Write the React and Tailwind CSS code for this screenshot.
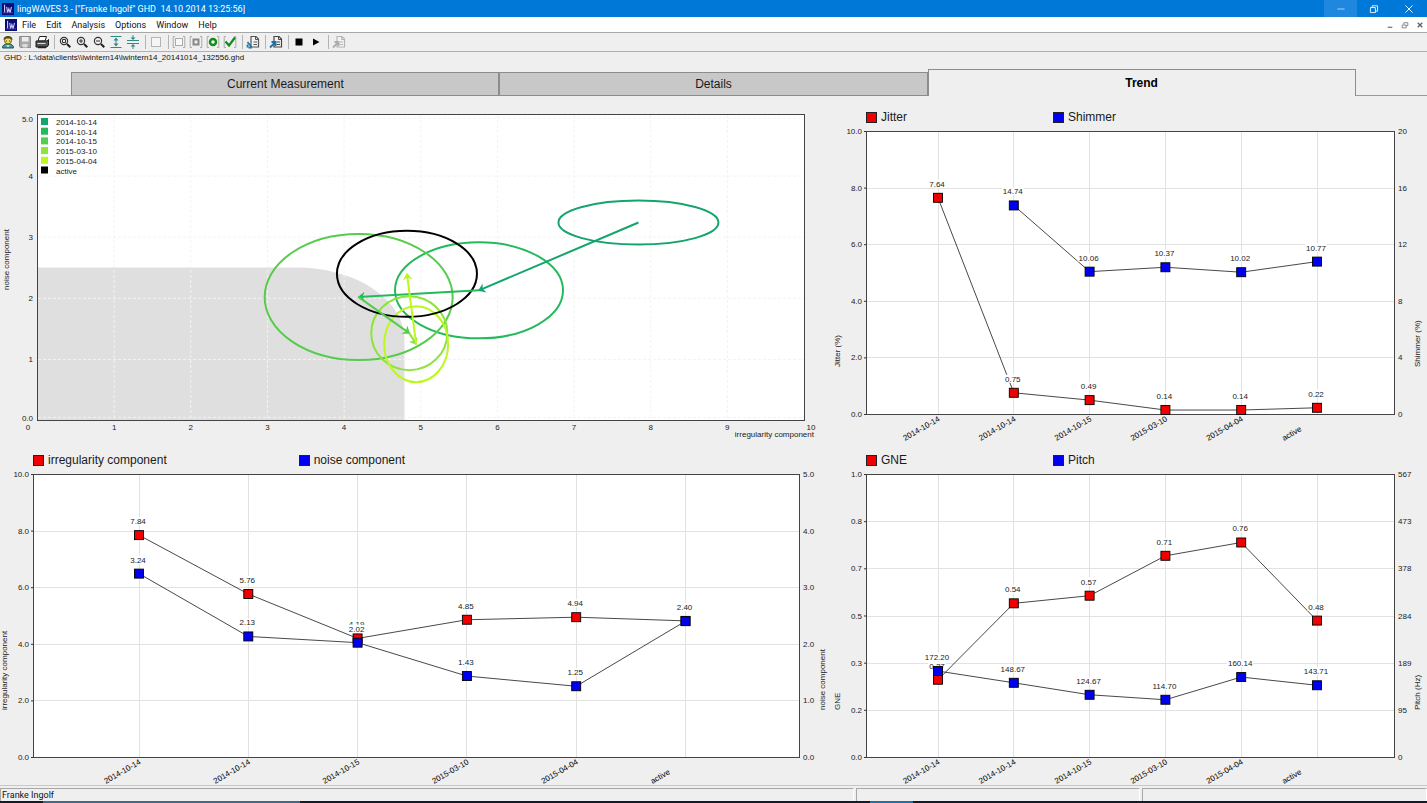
import React, { useState } from 'react';
import clsx from 'clsx';

const MENU = ['File', 'Edit', 'Analysis', 'Options', 'Window', 'Help'];
const TABS = ['Current Measurement', 'Details', 'Trend'];
const SESSIONS = ['2014-10-14', '2014-10-14', '2014-10-15', '2015-03-10', '2015-04-04', 'active'];

const RED = '#f00000';
const BLUE = '#0000f0';

const trendCharts = {
  components: {
    width: 830,
    left: 33,
    right: 799,
    firstX: 139,
    stepX: 109.3,
    leftTicks: ['10.0', '8.0', '6.0', '4.0', '2.0', '0.0'],
    rightTicks: ['5.0', '4.0', '3.0', '2.0', '1.0', '0.0'],
    leftTitle: 'irregularity component',
    rightTitle: 'noise component',
    series: [
      { name: 'irregularity component', color: RED, max: 10, values: [7.84, 5.76, 4.19, 4.85, 4.94, 4.81] },
      { name: 'noise component', color: BLUE, max: 5, values: [3.24, 2.13, 2.02, 1.43, 1.25, 2.4] }
    ]
  },
  jitter: {
    width: 597,
    left: 36,
    right: 564,
    firstX: 108,
    stepX: 75.8,
    leftTicks: ['10.0', '8.0', '6.0', '4.0', '2.0', '0.0'],
    rightTicks: ['20', '16', '12', '8', '4', '0'],
    leftTitle: 'Jitter (%)',
    rightTitle: 'Shimmer (%)',
    series: [
      { name: 'Jitter', color: RED, max: 10, values: [7.64, 0.75, 0.49, 0.14, 0.14, 0.22] },
      { name: 'Shimmer', color: BLUE, max: 20, values: [null, 14.74, 10.06, 10.37, 10.02, 10.77] }
    ]
  },
  gne: {
    width: 597,
    left: 36,
    right: 564,
    firstX: 108,
    stepX: 75.8,
    leftTicks: ['1.0', '0.8', '0.7', '0.5', '0.3', '0.2', '0.0'],
    rightTicks: ['567', '473', '378', '284', '189', '95', '0'],
    leftTitle: 'GNE',
    rightTitle: 'Pitch (Hz)',
    series: [
      { name: 'GNE', color: RED, max: 1, values: [0.273, 0.543, 0.57, 0.711, 0.758, 0.482] },
      { name: 'Pitch', color: BLUE, max: 567, values: [172.2, 148.67, 124.67, 114.7, 160.14, 143.71] }
    ]
  }
};

const ellipses = [
  { label: '2014-10-14', color: '#14a46c', x: 7.84, y: 3.24, rx: 80, ry: 22 },
  { label: '2014-10-14', color: '#24ba5c', x: 5.76, y: 2.13, rx: 84, ry: 48 },
  { label: '2014-10-15', color: '#56cc4c', x: 4.19, y: 2.02, rx: 94, ry: 63 },
  { label: '2015-03-10', color: '#8ce43c', x: 4.85, y: 1.43, rx: 38, ry: 37 },
  { label: '2015-04-04', color: '#bcf820', x: 4.94, y: 1.25, rx: 32, ry: 38 },
  { label: 'active', color: '#000000', x: 4.82, y: 2.4, rx: 70, ry: 43 }
];

/* ---------- toolbar icons ---------- */

const Svg = ({ children, className = 'h-3.5 w-3.5' }) => (
  <svg viewBox="0 0 14 14" className={className} fill="none" aria-hidden="true">
    {children}
  </svg>
);

const Logo = () => (
  <Svg className="h-3 w-3 shrink-0">
    <rect width="14" height="14" fill="#0b0b78" />
    <path d="M3 2v9M5.5 4.5l1 7 1.5-5 1.5 5 1.5-7" stroke="#c9c9f4" strokeWidth="1.3" />
    <path d="M1 11.5h12" stroke="#4f4fb8" />
  </Svg>
);

const Magnifier = ({ children }) => (
  <Svg>
    <circle cx="6" cy="6" r="3.6" stroke="#333" strokeWidth="1.2" />
    <path d="M9 9l3.3 3.3" stroke="#222" strokeWidth="2" />
    {children}
  </Svg>
);

const Brackets = ({ children }) => (
  <Svg>
    <path d="M3 1.5H1.2v11H3M11 1.5h1.8v11H11" stroke="#aaa" />
    {children}
  </Svg>
);

const PageArrow = ({ page, arrow, inward }) => (
  <Svg>
    <path d="M5 1.5h5L12.500 4v8H5z" fill="#f4f4f4" stroke={page} strokeWidth="1.2" />
    <path d="M9.5 1.500v3h3M7.500 7H11M7.500 9.500H11" stroke={page} />
    {inward ? (
      <path d="M1 12.5l5-5M2.500 7h4v4" stroke={arrow} strokeWidth="1.8" />
    ) : (
      <path d="M1.500 7l4 5M1.500 12.5v-3M2.500 12.500h3.500" stroke={arrow} strokeWidth="1.8" />
    )}
  </Svg>
);

const toolGroups = [
  [
    {
      name: 'Client',
      icon: (
        <Svg>
          <path d="M1.5 13c0-3 2-4 5.5-4s5.5 1 5.5 4z" fill="#3d9aa8" stroke="#24525c" />
          <circle cx="7" cy="5.5" r="3.5" fill="#f6dc58" stroke="#6b5a12" />
          <path d="M2.5 5C2.5 2 4.5 1 7 1s4.5 1 4.5 4L9 3.5H5z" fill="#4d4a12" />
          <path d="M5.5 5.5v1M8.5 5.5v1" stroke="#333" />
          <path d="M5 10l2 2.5L9 10z" fill="#f4e46a" />
        </Svg>
      )
    },
    {
      name: 'Save',
      icon: (
        <Svg>
          <path d="M1.5 1.5h11v11h-10l-1-1z" fill="#a9a9a9" stroke="#8a8a8a" />
          <path d="M4 2h6.5v4.5H4z" fill="#ededed" />
          <path d="M4.5 9h5v3.5h-5z" fill="#dcdcdc" />
        </Svg>
      )
    },
    {
      name: 'Print',
      icon: (
        <Svg>
          <path d="M4.5 1.5h7L10 6H3z" fill="#fff" stroke="#222" />
          <path d="M1 6h11l1.5-1.5V10L12 12H1z" fill="#555" stroke="#1a1a1a" />
          <path d="M2.5 8.5h8" stroke="#ddd" />
          <path d="M3 12.5h8" stroke="#222" strokeWidth="1.5" />
        </Svg>
      )
    }
  ],
  [
    { name: 'Zoom selection', icon: <Magnifier><path d="M4.5 4.5h3v3h-3z" stroke="#333" /></Magnifier> },
    { name: 'Zoom in', icon: <Magnifier><path d="M4 6h4M6 4v4" stroke="#333" /></Magnifier> },
    { name: 'Zoom out', icon: <Magnifier><path d="M4 6h4" stroke="#333" /></Magnifier> },
    {
      name: 'Expand',
      icon: (
        <Svg>
          <path d="M1.5 1.5h11M1.5 12.5h11" stroke="#2d8c86" strokeWidth="1.2" />
          <path d="M7 4v6" stroke="#2d8c86" />
          <path d="M4.5 5.5L7 2.5l2.5 3zM4.5 8.5l2.5 3 2.5-3z" fill="#2d8c86" />
        </Svg>
      )
    },
    {
      name: 'Compress',
      icon: (
        <Svg>
          <path d="M1 5.5h12M1 8.5h12" stroke="#2d8c86" strokeWidth="1.2" />
          <path d="M7 0v3M7 11v3" stroke="#2d8c86" />
          <path d="M4.5 2.5L7 5l2.5-2.5zM4.5 11.5L7 9l2.5 2.5z" fill="#2d8c86" />
        </Svg>
      )
    }
  ],
  [{ name: 'Frame', icon: <Svg><rect x="2.5" y="2.5" width="9" height="9" fill="#f5f5f5" stroke="#b4b4b4" /></Svg> }],
  [
    { name: 'Empty marker', icon: <Brackets><rect x="3.5" y="3.5" width="7" height="7" fill="#f8f8f8" stroke="#aaa" /></Brackets> },
    { name: 'Filled marker', icon: <Brackets><rect x="4.5" y="4.5" width="5" height="5" fill="#eee" stroke="#888" strokeWidth="2" /></Brackets> },
    { name: 'Record', icon: <Brackets><circle cx="7" cy="7" r="3" fill="#fff" stroke="#148c1c" strokeWidth="2.5" /></Brackets> },
    { name: 'Accept', icon: <Brackets><path d="M2.5 6.5L6 10.5l6-8" stroke="#128a18" strokeWidth="2.2" /></Brackets> }
  ],
  [{ name: 'Import', icon: <PageArrow page="#555" arrow="#2878a8" /> }],
  [{ name: 'Export', icon: <PageArrow page="#444" arrow="#2070a8" inward /> }],
  [
    { name: 'Stop', icon: <Svg><path d="M3.5 3.5h7v7h-7z" fill="#000" /></Svg> },
    { name: 'Play', icon: <Svg><path d="M4 3.5v7L10.5 7z" fill="#000" /></Svg> }
  ],
  [{ name: 'Send', icon: <PageArrow page="#b4b4b4" arrow="#adadad" inward /> }]
];

/* ---------- window chrome ---------- */

const TitleBar = () => (
  <header className="flex h-[17px] items-center bg-[#0078d7] pl-0.5 text-white">
    <Logo />
    <h1 className="grow whitespace-pre pl-[3px] font-[Roboto,sans-serif] text-[9px] leading-3">
      {'lingWAVES 3 - ["Franke Ingolf" GHD  14.10.2014 13:25:56]'}
    </h1>
    <button aria-label="Minimize" className="flex h-full w-[33px] items-center justify-center bg-[#1f88de]">
      <Svg className="h-2.5 w-2.5"><path d="M2 7h10" stroke="#d5ecff" /></Svg>
    </button>
    <button aria-label="Restore" className="flex h-full w-[34px] items-center justify-center">
      <Svg className="h-2.5 w-2.5"><path d="M2 5h7v7H2zM4.5 5V2.5H12V10H9" stroke="#fff" strokeWidth="1.2" /></Svg>
    </button>
    <button aria-label="Close" className="flex h-full w-9 items-center justify-center">
      <Svg className="h-2.5 w-2.5"><path d="M2 2l10 10M12 2L2 12" stroke="#fff" strokeWidth="1.3" /></Svg>
    </button>
  </header>
);

const MenuBar = () => (
  <nav className="flex h-4 items-center border-b border-[#a8a8a8] bg-white pl-[5px] font-[Roboto,sans-serif] text-[9px] leading-3 text-[#111]">
    <Logo />
    <div className="flex grow gap-2.5 pl-[5px]">
      {MENU.map((item) => (
        <button key={item}>{item}</button>
      ))}
    </div>
    <div className="flex">
      <button aria-label="Minimize document" className="flex w-[15px] justify-center">
        <Svg className="h-2 w-2"><path d="M3 11h8" stroke="#666" strokeWidth="2" /></Svg>
      </button>
      <button aria-label="Restore document" className="flex w-[15px] justify-center">
        <Svg className="h-2 w-2"><path d="M2 7h7v5H2zM5 6V3h7v5H9" stroke="#777" strokeWidth="1.5" /></Svg>
      </button>
      <button aria-label="Close document" className="flex w-[15px] justify-center">
        <Svg className="h-2 w-2"><path d="M3 3l8 8M11 3l-8 8" stroke="#666" strokeWidth="2.5" /></Svg>
      </button>
    </div>
  </nav>
);

const Toolbar = () => (
  <div role="toolbar" className="flex h-[19px] items-center border-b border-[#b0b0b0]">
    {toolGroups.map((group, i) => (
      <React.Fragment key={i}>
        {i > 0 && (
          <div className="flex w-1.5 justify-center">
            <div className="h-3.5 w-px bg-[#b4b4b4]" />
          </div>
        )}
        {group.map((tool) => (
          <button key={tool.name} aria-label={tool.name} className="flex w-[17px] pl-px">
            {tool.icon}
          </button>
        ))}
      </React.Fragment>
    ))}
  </div>
);

const Tabs = ({ active, onChange }) => (
  <div role="tablist" className="grid h-[27px] grid-cols-[5fr_30fr_30fr_30fr_5fr] items-end">
    <div className="h-full border-b border-[#999]" />
    {TABS.map((tab) => (
      <button
        key={tab}
        role="tab"
        aria-selected={tab === active}
        onClick={() => onChange(tab)}
        className={clsx(
          'border-[#8c8c8c] text-xs text-[#1a1a1a]',
          tab === active ? 'h-[27px] border-x border-t font-bold text-black' : 'h-6 border bg-[#c8c8c8]'
        )}
      >
        {tab}
      </button>
    ))}
    <div className="h-full border-b border-[#999]" />
  </div>
);

/* ---------- charts ---------- */

const ChartLegend = ({ series, className }) => (
  <div className={clsx('flex h-[22px] items-center pt-0.5 text-xs text-[#1a1a1a]', className)}>
    {series.map((s) => (
      <div key={s.name} className="flex w-1/3 items-center gap-1">
        <span className="h-[11px] w-[11px] border border-[#222]" style={{ backgroundColor: s.color }} />
        <span>{s.name}</span>
      </div>
    ))}
  </div>
);

const PLOT_TOP = 4;
const PLOT_HEIGHT = 283;
const PLOT_BOTTOM = PLOT_TOP + PLOT_HEIGHT;

const LineChart = ({ chart }) => {
  const { width, left, right, firstX, stepX, leftTicks, rightTicks } = chart;
  const xOf = (i) => firstX + i * stepX;
  const tickY = (i, ticks) => PLOT_TOP + (i * PLOT_HEIGHT) / (ticks.length - 1);

  return (
    <svg viewBox={`0 0 ${width} 315`} className="block w-full text-[8px]" fill="#222">
      <rect x={left + 0.5} y={PLOT_TOP + 0.5} width={right - left} height={PLOT_HEIGHT} fill="#fff" />
      <g stroke="#e2e2e2" shapeRendering="crispEdges">
        {leftTicks.map((t, i) => (
          <line key={t} x1={left} x2={right} y1={tickY(i, leftTicks) + 0.5} y2={tickY(i, leftTicks) + 0.5} />
        ))}
        {SESSIONS.map((s, i) => (
          <line key={i} x1={xOf(i)} x2={xOf(i)} y1={PLOT_TOP} y2={PLOT_BOTTOM} />
        ))}
      </g>
      <rect
        x={left + 0.5}
        y={PLOT_TOP + 0.5}
        width={right - left}
        height={PLOT_HEIGHT}
        fill="none"
        stroke="#444"
        shapeRendering="crispEdges"
      />

      {/* axes */}
      {leftTicks.map((t, i) => (
        <g key={t}>
          <line x1={left - 2} x2={left} y1={tickY(i, leftTicks) + 0.5} y2={tickY(i, leftTicks) + 0.5} stroke="#333" />
          <text x={left - 4} y={tickY(i, leftTicks) + 3} textAnchor="end">{t}</text>
        </g>
      ))}
      {rightTicks.map((t, i) => (
        <text key={t} x={right + 4} y={tickY(i, rightTicks) + 3}>{t}</text>
      ))}
      {SESSIONS.map((s, i) => (
        <text key={i} fill="#000" transform={`translate(${xOf(i) - 33} 314) rotate(-30)`}>{s}</text>
      ))}
      <text transform={`translate(${left - 26} 240) rotate(-90)`}>{chart.leftTitle}</text>
      <text transform={`translate(${right + 26} 240) rotate(-90)`}>{chart.rightTitle}</text>

      {/* series */}
      {chart.series.map((s) => {
        const points = s.values
          .map((v, i) => ({ v, x: xOf(i), y: PLOT_BOTTOM - (v / s.max) * PLOT_HEIGHT }))
          .filter((p) => p.v !== null);
        return (
          <g key={s.name}>
            <polyline points={points.map((p) => `${p.x},${p.y}`).join(' ')} fill="none" stroke="#333" strokeWidth="0.9" />
            {points.map((p) => {
              const label = p.v.toFixed(2);
              const w = label.length * 4.4;
              return (
                <g key={p.x}>
                  <rect x={p.x - 1 - w / 2} y={p.y - 18} width={w} height="8" fill="#fff" />
                  <text x={p.x - 1} y={p.y - 11} textAnchor="middle">{label}</text>
                  <rect x={p.x - 4.5} y={p.y - 4.5} width="9" height="9" fill={s.color} stroke="#000" strokeWidth="0.9" />
                </g>
              );
            })}
          </g>
        );
      })}
    </svg>
  );
};

const ScatterChart = () => {
  const xOf = (v) => 37.5 + v * 76.65;
  const yOf = (v) => 324.5 - v * 61.1;

  return (
    <svg viewBox="0 0 830 352" className="block w-full text-[8px]" fill="#222">
      <rect x="37.5" y="18.5" width="767" height="306" fill="#fff" />
      <path d="M37.5 171.5H296A108 72 0 0 1 404.5 244V324.5H37.5z" fill="#dfdfdf" />
      <g stroke="#f3f3f3" strokeDasharray="3 2">
        {[1, 2, 3, 4, 5, 6, 7, 8, 9].map((v) => (
          <line key={v} x1={xOf(v)} x2={xOf(v)} y1="19" y2="324" />
        ))}
        {[0.05, 1, 2, 3, 4, 4.95].map((v) => (
          <line key={v} x1="38" x2="804" y1={yOf(v)} y2={yOf(v)} />
        ))}
      </g>
      <rect x="37.5" y="18.5" width="767" height="306" fill="none" stroke="#444" />

      {/* axis labels */}
      <g textAnchor="end">
        <text x="33" y="26">5.0</text>
        {[4, 3, 2, 1].map((v) => (
          <text key={v} x="33" y={yOf(v) + 3}>{v}</text>
        ))}
        <text x="33" y="325">0.0</text>
      </g>
      <g textAnchor="middle">
        <text x="28" y="334">0</text>
        {[1, 2, 3, 4, 5, 6, 7, 8, 9].map((v) => (
          <text key={v} x={xOf(v)} y="334">{v}</text>
        ))}
        <text x="811" y="334">10</text>
      </g>
      <text x="814" y="341" textAnchor="end">irregularity component</text>
      <text transform="translate(9 194) rotate(-90)">noise component</text>

      {/* legend */}
      {ellipses.map((e, i) => (
        <g key={i}>
          <rect x="41" y={22 + i * 9.7} width="7" height="7" fill={e.color} />
          <text x="56" y={29 + i * 9.7}>{e.label}</text>
        </g>
      ))}

      {/* spread of each session */}
      {ellipses.map((e, i) => (
        <ellipse
          key={i}
          cx={xOf(e.x)}
          cy={yOf(e.y)}
          rx={e.rx}
          ry={e.ry}
          fill="none"
          stroke={e.color}
          strokeWidth="2"
        />
      ))}

      {/* arrows from one session to the next */}
      {ellipses.slice(0, -1).map((e, i) => {
        const next = ellipses[i + 1];
        const x1 = xOf(e.x);
        const y1 = yOf(e.y);
        const x2 = xOf(next.x);
        const y2 = yOf(next.y);
        const angle = (Math.atan2(y2 - y1, x2 - x1) * 180) / Math.PI;
        return (
          <g key={i}>
            <line x1={x1} y1={y1} x2={x2} y2={y2} stroke={e.color} strokeWidth="2" />
            <path d="M1 0L-6 -5L-4 0L-6 5z" fill={e.color} transform={`translate(${x2} ${y2}) rotate(${angle})`} />
          </g>
        );
      })}
    </svg>
  );
};

const StatusBar = () => (
  <footer>
    <div className="grid grid-cols-[3fr_1fr_1fr] gap-0.5 border-t border-[#c8c8c8] pt-0.5">
      <div className="h-[13px] border-l border-t border-[#a8a8a8] border-r border-r-white pl-px font-[Roboto,sans-serif] text-[9px] leading-3 text-[#111]">
        Franke Ingolf
      </div>
      <div className="h-[13px] border-l border-t border-[#a8a8a8] border-r border-r-white" />
      <div className="h-[13px] border-l border-t border-[#a8a8a8] border-r border-r-white" />
    </div>
    <div className="flex h-0.5 bg-[#101c28]">
      <div className="ml-[3%] w-[18%] bg-[#3a6a90]" />
      <div className="ml-[40%] w-[3%] bg-[#2070a8]" />
    </div>
  </footer>
);

const App = () => {
  const [activeTab, setActiveTab] = useState('Trend');
  const { components, jitter, gne } = trendCharts;

  return (
    <div className="flex min-h-screen flex-col bg-[#efefef] font-['Liberation_Sans',Arial,sans-serif]">
      <TitleBar />
      <MenuBar />
      <Toolbar />
      <p className="h-[17px] pl-1 text-[8px] leading-3 text-[#111]">
        {'GHD : L:\\data\\clients\\\\lwintern14\\lwintern14_20141014_132556.ghd'}
      </p>
      <Tabs active={activeTab} onChange={setActiveTab} />

      <main className="grid grow grid-cols-[830fr_597fr] content-start">
        <section className="flex min-w-0 flex-col justify-between">
          <ScatterChart />
          <div>
            <ChartLegend series={components.series} className="pl-[33px]" />
            <LineChart chart={components} />
          </div>
        </section>
        <section className="flex min-w-0 flex-col justify-between pt-[9px]">
          <div>
            <ChartLegend series={jitter.series} className="pl-9" />
            <LineChart chart={jitter} />
          </div>
          <div>
            <ChartLegend series={gne.series} className="pl-9" />
            <LineChart chart={gne} />
          </div>
        </section>
      </main>

      <StatusBar />
    </div>
  );
};

export default App;
